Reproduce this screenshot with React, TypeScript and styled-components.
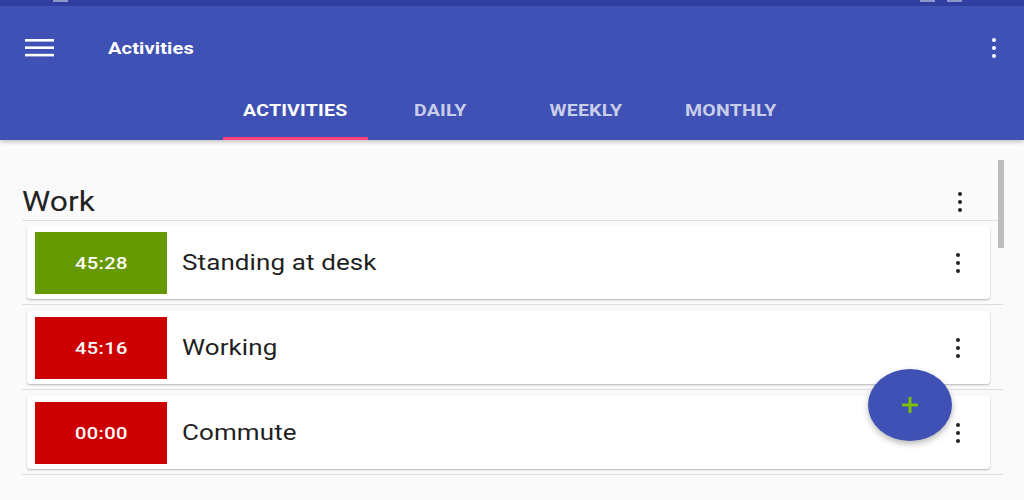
import React from "react";
import styled, { createGlobalStyle } from "styled-components";

type Activity = {
  time: string;
  label: string;
  running: boolean;
};

const GlobalStyle = createGlobalStyle`
  html, body {
    margin: 0;
    padding: 0;
    background: #fafafa;
  }
  * {
    box-sizing: border-box;
  }
`;

const Screen = styled.div`
  position: relative;
  width: 1024px;
  height: 500px;
  overflow: hidden;
  background: #fafafa;
  font-family: Roboto, "Liberation Sans", sans-serif;
`;

// 스크린샷이 가로로 늘어나 있어서 글자도 같이 늘림
const Wide = styled.span<{ $origin?: string }>`
  display: inline-block;
  transform: scaleX(1.18);
  transform-origin: ${(p) => p.$origin || "left"} center;
  white-space: nowrap;
`;

// 상단 바
const AppBar = styled.header`
  background: #3f51b5;
  box-shadow: 0 2px 4px rgba(0, 0, 0, 0.22);
  position: relative;
  z-index: 1;
`;

const StatusBar = styled.div`
  height: 6px;
  background: #303f9f;
  display: flex;
  align-items: flex-start;
  padding: 0 0 0 53px;
  gap: 12px;

  > span {
    height: 2px;
    width: 15px;
    background: rgba(255, 255, 255, 0.45);
  }
  > span.right {
    margin-left: auto;
  }
`;

const Toolbar = styled.div`
  height: 84px;
  display: flex;
  align-items: center;
  padding: 0 26px 0 25px;
`;

const Title = styled.h1`
  margin: 0 0 0 53px;
  flex: 1;
  color: #ffffff;
  font-size: 17px;
  font-weight: 700;
  letter-spacing: 0.1px;
`;

const TabRow = styled.nav`
  display: flex;
  height: 50px;
  padding-left: 223px;
`;

const Tab = styled.div<{ $active?: boolean }>`
  width: 145px;
  display: flex;
  justify-content: center;
  padding-top: 12px;
  font-size: 16.5px;
  font-weight: 700;
  letter-spacing: 0.2px;
  line-height: 18px;
  color: ${(p) => (p.$active ? "#ffffff" : "rgba(255,255,255,0.72)")};
  border-bottom: 3px solid ${(p) => (p.$active ? "#ff4081" : "transparent")};
`;

// 본문
const Content = styled.main`
  padding: 0 21px 0 22px;
  display: flex;
  flex-direction: column;
`;

const GroupHeader = styled.div`
  display: flex;
  align-items: center;
  height: 81px;
  padding-top: 44px;
  padding-right: 39px;
  border-bottom: 1px solid #dedede;
`;

const GroupTitle = styled.h2`
  margin: 0;
  flex: 1;
  font-size: 27px;
  font-weight: 400;
  color: #222222;
`;

const Row = styled.div`
  padding: 5px 13px 5px 5px;
  margin-bottom: 1px;
  border-bottom: 1px solid #dedede;
`;

const Card = styled.div`
  display: flex;
  align-items: center;
  height: 73px;
  padding: 5px 28px 5px 8px;
  background: #ffffff;
  border-radius: 3px;
  box-shadow: 0 1px 2px rgba(0, 0, 0, 0.28);
`;

const Timer = styled.div<{ $running: boolean }>`
  width: 132px;
  height: 62px;
  display: flex;
  align-items: center;
  justify-content: center;
  background: ${(p) => (p.$running ? "#669900" : "#cc0000")};
  color: #ffffff;
  font-size: 17px;
  font-weight: 500;
  letter-spacing: 0.3px;
`;

const Label = styled.span`
  flex: 1;
  margin-left: 15px;
  font-size: 22px;
  color: #1f1f1f;
  letter-spacing: 0.1px;
`;

const ScrollThumb = styled.div`
  position: absolute;
  left: 998px;
  top: 160px;
  width: 6px;
  height: 88px;
  background: #bdbdbd;
`;

const Fab = styled.button`
  position: absolute;
  left: 868px;
  top: 369px;
  width: 84px;
  height: 72px;
  border: none;
  border-radius: 50%;
  background: #3f51b5;
  box-shadow: 0 3px 6px rgba(0, 0, 0, 0.28);
  display: flex;
  align-items: center;
  justify-content: center;
  padding: 0;
`;

const Dots = ({ color }: { color: string }) => (
  <svg width="8" height="22" viewBox="0 0 8 22">
    <circle cx="4" cy="3" r="2" fill={color} />
    <circle cx="4" cy="11" r="2" fill={color} />
    <circle cx="4" cy="19" r="2" fill={color} />
  </svg>
);

const Menu = () => (
  <svg width="30" height="18" viewBox="0 0 30 18">
    <rect x="0" y="0" width="29" height="2.6" fill="#ffffff" />
    <rect x="0" y="7.4" width="29" height="2.6" fill="#ffffff" />
    <rect x="0" y="14.8" width="29" height="2.6" fill="#ffffff" />
  </svg>
);

function App() {
  const activities: Activity[] = [
    { time: "45:28", label: "Standing at desk", running: true },
    { time: "45:16", label: "Working", running: false },
    { time: "00:00", label: "Commute", running: false },
  ];
  const tabs = ["ACTIVITIES", "DAILY", "WEEKLY", "MONTHLY"];

  return (
    <Screen>
      <GlobalStyle />
      <AppBar>
        <StatusBar>
          <span />
          <span className="right" />
          <span style={{ marginRight: 62 }} />
        </StatusBar>
        <Toolbar>
          <Menu />
          <Title>
            <Wide>Activities</Wide>
          </Title>
          <Dots color="#ffffff" />
        </Toolbar>
        <TabRow>
          {tabs.map((t, i) => (
            <Tab key={t} $active={i === 0}>
              <Wide $origin="center">{t}</Wide>
            </Tab>
          ))}
        </TabRow>
      </AppBar>

      <Content>
        <GroupHeader>
          <GroupTitle>
            <Wide>Work</Wide>
          </GroupTitle>
          <Dots color="#222222" />
        </GroupHeader>
        {activities.map((a) => (
          <Row key={a.label}>
            <Card>
              <Timer $running={a.running}>
                <Wide $origin="center">{a.time}</Wide>
              </Timer>
              <Label>
                <Wide>{a.label}</Wide>
              </Label>
              <Dots color="#222222" />
            </Card>
          </Row>
        ))}
      </Content>

      <ScrollThumb />
      <Fab>
        <svg width="18" height="18" viewBox="0 0 18 18">
          <rect x="7.6" y="1" width="2.8" height="16" fill="#7cc400" />
          <rect x="1" y="7.6" width="16" height="2.8" fill="#7cc400" />
        </svg>
      </Fab>
    </Screen>
  );
}

export default App;
